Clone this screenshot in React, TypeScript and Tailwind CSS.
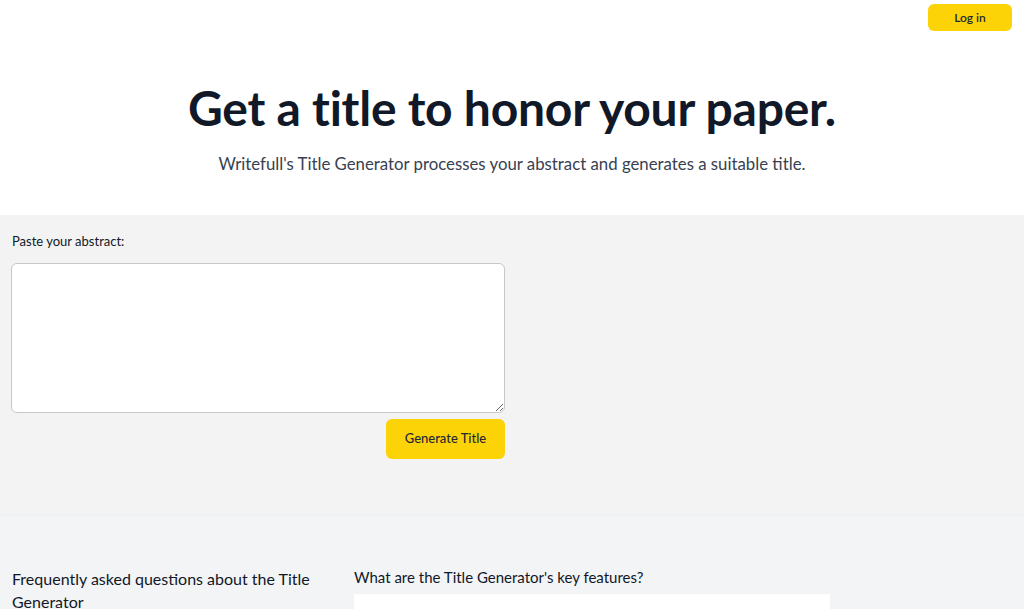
export default function App() {
  return (
    <div className="min-h-[609px] bg-white font-['Lato','Liberation_Sans',sans-serif] text-[#111827]">
      <header className="flex justify-end px-3 pt-1">
        <button className="h-[27px] w-[84px] rounded-md bg-[#fcd307] text-[12px] font-semibold text-[#1f2937]">
          Log in
        </button>
      </header>

      <section className="flex flex-col items-center pt-[47px] pb-[39px]">
        <h1 className="text-[48px] font-bold leading-[60px] tracking-[-0.25px] text-[#111827]">
          Get a title to honor your paper.
        </h1>
        <p className="mt-[14px] text-[16.8px] leading-6 text-[#374151]">
          Writefull's Title Generator processes your abstract and generates a suitable title.
        </p>
      </section>

      <section className="bg-[#f3f3f4] px-[11px] pt-[16px] pb-[56px]">
        <label className="block pl-px text-[13px] leading-5 text-[#111827]">Paste your abstract:</label>
        <div className="mt-[12px] flex w-[494px] flex-col items-end">
          <textarea className="h-[150px] w-full rounded-md border border-[#c4c7cc] bg-white" />
          <button className="mt-[6px] h-[40px] w-[119px] rounded-md bg-[#fcd307] text-[13px] font-medium text-[#1f2937]">
            Generate Title
          </button>
        </div>
      </section>

      <section className="border-t border-[#eeeff1] bg-[#f3f4f6] px-3 pt-[51px]">
        <div className="flex gap-[22px]">
          <h2 className="w-[320px] text-[16px] leading-[23px] text-[#111827]">
            Frequently asked questions about the Title Generator
          </h2>
          <div className="w-[476px]">
            <h3 className="text-[15px] leading-5 text-[#111827]">What are the Title Generator's key features?</h3>
            <div className="mt-[7px] h-[40px] bg-white" />
          </div>
        </div>
      </section>
    </div>
  );
}
